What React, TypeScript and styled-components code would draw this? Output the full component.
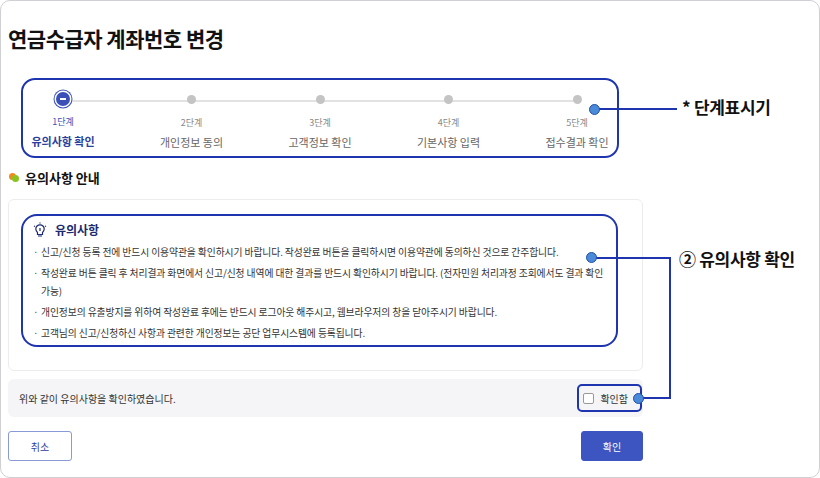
import React from "react";
import styled, { createGlobalStyle } from "styled-components";

const G = createGlobalStyle`
  html,body{margin:0;padding:0;background:#fff;}
  body{font-family:"Noto Sans CJK KR","Noto Sans",sans-serif;color:#222;}
`;
const Frame = styled.div`
  position:relative;width:818px;height:476px;border:1px solid #cfcfd4;border-radius:10px;box-sizing:content-box;overflow:hidden;
`;
const Main = styled.div`
  width:635px;padding:20px 0 0 7px;display:flex;flex-direction:column;
`;
const Title = styled.h1`
  margin:0;font-size:21px;font-weight:700;color:#111;letter-spacing:-0.5px;line-height:34px;
`;
const Stepper = styled.div`
  margin:23px 24px 0 13px;height:76px;border:2px solid #1f35b0;border-radius:14px;display:flex;justify-content:center;position:relative;overflow:hidden;
`;
const Track = styled.div`
  position:absolute;left:46px;right:37px;top:20px;height:2px;background:#e2e2e2;
`;
const Step = styled.div`
  flex:none;width:128.5px;display:flex;flex-direction:column;align-items:center;position:relative;z-index:1;
`;
const Dot = styled.div<{ $on?: boolean }>`
  margin-top:${p => (p.$on ? 12 : 15)}px;width:${p => (p.$on ? 14 : 9)}px;height:${p => (p.$on ? 14 : 9)}px;border-radius:50%;
  background:${p => (p.$on ? "#3b4fb8" : "#c4c4c4")};
  box-shadow:${p => (p.$on ? "0 0 0 1.5px #fff,0 0 0 2.5px #3b4fb8" : "none")};
  display:flex;align-items:center;justify-content:center;
  &::after{content:"";display:${p => (p.$on ? "block" : "none")};width:6px;height:1.5px;background:#fff;}
`;
const StepNo = styled.div<{ $on?: boolean }>`
  margin-top:${p => (p.$on ? 10 : 13)}px;font-size:9px;color:${p => (p.$on ? "#3b4fb8" : "#888")};line-height:12px;
`;
const StepName = styled.div<{ $on?: boolean }>`
  margin-top:6px;font-size:11px;font-weight:${p => (p.$on ? 700 : 400)};color:${p => (p.$on ? "#2b3f9e" : "#666")};line-height:15px;
`;
const SecTitle = styled.div`
  margin-top:10px;display:flex;align-items:center;gap:5px;font-size:13px;font-weight:700;color:#111;padding-left:1px;
`;
const Bullet = styled.span`
  position:relative;width:11px;height:9px;display:inline-block;
  &::before{content:"";position:absolute;left:0;top:0;width:7px;height:7px;border-radius:50%;background:#f08a1c;}
  &::after{content:"";position:absolute;left:3px;top:2px;width:7px;height:7px;border-radius:50%;background:#8bc21f;}
`;
const Card = styled.div`
  margin-top:12px;height:172px;border:1px solid #ececec;border-radius:6px;padding:14px 24px 0 12px;box-sizing:border-box;
`;
const Notice = styled.div`
  border:2px solid #1f35b0;border-radius:16px;padding:5px 10px 0 10px;height:133px;box-sizing:border-box;
`;
const NoticeHead = styled.div`
  display:flex;align-items:center;gap:8px;font-size:12px;font-weight:700;color:#1c2a6e;margin-bottom:5px;
`;
const Item = styled.div`
  font-size:9.8px;color:#333;line-height:18px;padding-left:8px;position:relative;margin-bottom:3px;letter-spacing:-0.1px;
  &::before{content:"·";position:absolute;left:0;}
`;
const Agree = styled.div`
  margin-top:8px;height:38px;background:#f5f5f7;border-radius:6px;display:flex;align-items:center;justify-content:space-between;padding:0 0 0 11px;
  font-size:10px;color:#333;
`;
const CheckBox = styled.label`
  height:24px;border:2px solid #1f35b0;border-radius:5px;display:flex;align-items:center;gap:6px;padding:0 12px 0 4px;margin-right:1px;font-size:10px;color:#333;
`;
const Box = styled.span`
  width:9px;height:9px;border:1px solid #999;border-radius:2px;background:#fff;
`;
const Buttons = styled.div`
  margin-top:14px;display:flex;justify-content:space-between;
`;
const Btn = styled.button<{ $primary?: boolean }>`
  height:30px;width:${p => (p.$primary ? 62 : 64)}px;border-radius:3px;font-family:inherit;font-size:10px;
  border:1px solid ${p => (p.$primary ? "#3d55c0" : "#8a9ad6")};
  background:${p => (p.$primary ? "#3d55c0" : "#fff")};color:${p => (p.$primary ? "#fff" : "#2b3f9e")};
`;
const Pin = styled.span<{ $x: number; $y: number }>`
  position:absolute;left:${p => p.$x - 5}px;top:${p => p.$y - 5}px;width:9px;height:9px;border-radius:50%;background:#4a8ad8;border:1px solid #2050a8;z-index:3;
`;
const HLine = styled.span<{ $x: number; $y: number; $w: number }>`
  position:absolute;left:${p => p.$x}px;top:${p => p.$y}px;width:${p => p.$w}px;height:1.5px;background:#1f35b0;z-index:2;
`;
const VLine = styled.span<{ $x: number; $y: number; $h: number }>`
  position:absolute;left:${p => p.$x}px;top:${p => p.$y}px;height:${p => p.$h}px;width:1.5px;background:#1f35b0;z-index:2;
`;
const Label = styled.div<{ $x: number; $y: number }>`
  position:absolute;left:${p => p.$x}px;top:${p => p.$y}px;font-size:17px;font-weight:700;color:#111;letter-spacing:-0.3px;
`;

const steps = ["유의사항 확인", "개인정보 동의", "고객정보 확인", "기본사항 입력", "접수결과 확인"];
const items = [
  "신고/신청 등록 전에 반드시 이용약관을 확인하시기 바랍니다. 작성완료 버튼을 클릭하시면 이용약관에 동의하신 것으로 간주합니다.",
  "작성완료 버튼 클릭 후 처리결과 화면에서 신고/신청 내역에 대한 결과를 반드시 확인하시기 바랍니다. (전자민원 처리과정 조회에서도 결과 확인 가능)",
  "개인정보의 유출방지를 위하여 작성완료 후에는 반드시 로그아웃 해주시고, 웹브라우저의 창을 닫아주시기 바랍니다.",
  "고객님의 신고/신청하신 사항과 관련한 개인정보는 공단 업무시스템에 등록됩니다.",
];

export default function App() {
  return (
    <>
      <G />
      <Frame>
        <Main>
          <Title>연금수급자 계좌번호 변경</Title>
          <Stepper>
            <Track />
            {steps.map((s, i) => (
              <Step key={s}>
                <Dot $on={i === 0} />
                <StepNo $on={i === 0}>{i + 1}단계</StepNo>
                <StepName $on={i === 0}>{s}</StepName>
              </Step>
            ))}
          </Stepper>
          <SecTitle><Bullet />유의사항 안내</SecTitle>
          <Card>
            <Notice>
              <NoticeHead>
                <svg width="14" height="16" viewBox="0 0 14 16" fill="none" stroke="#1c2a6e" strokeWidth="1.2">
                  <path d="M4.5 10.5c-1-1-1.7-2-1.7-3.5a4.2 4.2 0 0 1 8.4 0c0 1.5-.7 2.5-1.7 3.5v2h-5z" />
                  <path d="M5 14h4M7 9V6M1 4l1 .6M13 4l-1 .6M7 .5v1" />
                </svg>
                유의사항
              </NoticeHead>
              {items.map(t => <Item key={t}>{t}</Item>)}
            </Notice>
          </Card>
          <Agree>
            위와 같이 유의사항을 확인하였습니다.
            <CheckBox><Box />확인함</CheckBox>
          </Agree>
          <Buttons>
            <Btn>취소</Btn>
            <Btn $primary>확인</Btn>
          </Buttons>
        </Main>
        <Pin $x={593} $y={108} />
        <HLine $x={593} $y={107} $w={83} />
        <Label $x={681} $y={93}>* 단계표시기</Label>
        <Pin $x={590} $y={256} />
        <HLine $x={590} $y={256} $w={79} />
        <VLine $x={668} $y={256} $h={142} />
        <HLine $x={637} $y={396} $w={32} />
        <Pin $x={637} $y={397} />
        <Label $x={678} $y={245}>② 유의사항 확인</Label>
      </Frame>
    </>
  );
}
